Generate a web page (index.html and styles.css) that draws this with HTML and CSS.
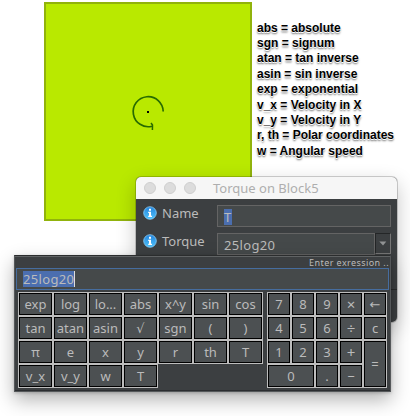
FILE: index.html
```html
<!DOCTYPE html>
<html lang="en">
<head>
<meta charset="utf-8">
<title>Torque on Block5</title>
<link rel="stylesheet" href="styles.css">
</head>
<body>
<main class="workspace">
  <div class="block">
    <svg class="torque" width="40" height="44" viewBox="0 0 40 44">
      <path d="M35.2 20.5A15 15 0 1 0 24 35.2" fill="none" stroke="#286b00" stroke-width="1.7"/>
      <path d="M23 32L24.5 34L24.4 39" fill="none" stroke="#286b00" stroke-width="1.5"/>
      <rect x="19" y="20" width="2" height="2" fill="#000"/>
    </svg>
  </div>
  <div class="legend">
    <div>abs = absolute</div>
    <div>sgn = signum</div>
    <div>atan = tan inverse</div>
    <div>asin = sin inverse</div>
    <div>exp = exponential</div>
    <div>v_x = Velocity in X</div>
    <div>v_y = Velocity in Y</div>
    <div>r, th = Polar coordinates</div>
    <div>w = Angular speed</div>
  </div>

  <section class="dialog">
    <header class="titlebar">
      <i class="dot"></i><i class="dot"></i><i class="dot"></i>
      <span class="title">Torque on Block5</span>
    </header>
    <div class="form">
      <div class="row">
        <svg class="info" width="14" height="14" viewBox="0 0 14 14"><defs><linearGradient id="b" x2="0" y2="1"><stop stop-color="#2383dc"/><stop offset="1" stop-color="#50c3fa"/></linearGradient></defs><circle cx="7" cy="7" r="6.3" fill="url(#b)" stroke="#8bcdf6" stroke-width=".8"/><path d="M6 2.8h2v2H6zM5.2 5.8H8v4h1v1.2H5.2V9.8H6V7h-.8z" fill="#fff"/></svg>
        <label class="name">Name</label>
        <div class="input"><span class="sel">T</span></div>
      </div>
      <div class="row">
        <svg class="info" width="14" height="14" viewBox="0 0 14 14"><circle cx="7" cy="7" r="6.3" fill="url(#b)" stroke="#8bcdf6" stroke-width=".8"/><path d="M6 2.8h2v2H6zM5.2 5.8H8v4h1v1.2H5.2V9.8H6V7h-.8z" fill="#fff"/></svg>
        <label>Torque</label>
        <div class="input combo">25log20</div>
        <div class="drop"><svg width="8" height="5" viewBox="0 0 8 5"><path d="M.3 .5h7L4 4.6z" fill="#919394"/></svg></div>
      </div>
    </div>
    <footer class="footer"></footer>
  </section>

  <section class="popup">
    <div class="hint">Enter exression ..</div>
    <div class="expression"><span class="sel">25log20</span></div>
    <div class="keypads">
      <div class="keys functions">
        <b>exp</b><b>log</b><b>lo...</b><b>abs</b><b>x^y</b><b>sin</b><b>cos</b>
        <b>tan</b><b>atan</b><b>asin</b><b>√</b><b>sgn</b><b>(</b><b>)</b>
        <b>π</b><b>e</b><b>x</b><b>y</b><b>r</b><b>th</b><b>T</b>
        <b>v_x</b><b>v_y</b><b>w</b><b>T</b>
      </div>
      <div class="keys numbers">
        <b>7</b><b>8</b><b>9</b><b class="op">×</b><b>←</b>
        <b>4</b><b>5</b><b>6</b><b class="op">÷</b><b>c</b>
        <b>1</b><b>2</b><b>3</b><b class="op">+</b><b class="equals">=</b>
        <b class="zero">0</b><b>.</b><b>−</b>
      </div>
    </div>
  </section>
</main>
</body>
</html>
```
FILE: styles.css
```css
* { box-sizing: border-box; }
body { margin: 0; background: #fff; }
.workspace {
  position: relative;
  width: 410px;
  height: 416px;
  overflow: hidden;
  font-family: "Noto Sans", "DejaVu Sans", sans-serif;
  font-size: 13px;
  color: #bbb;
}
.block {
  position: absolute;
  left: 44px;
  top: 2px;
  width: 208px;
  height: 219px;
  background: #b9e900;
  border: 2px solid #91b30c;
}
.torque { position: absolute; left: 82px; top: 87px; }
.legend {
  position: absolute;
  left: 257px;
  top: 20.6px;
  font: bold 12px/15.4px "Liberation Sans", sans-serif;
  color: #000;
  white-space: nowrap;
  text-shadow: 0 0 1px #fff, 0 1px 0 #fff, 0 2px 2px rgba(0, 0, 0, .6);
}
.dialog {
  position: absolute;
  left: 136px;
  top: 177px;
  width: 261px;
  height: 145px;
  background: #3c3f41;
  border-radius: 5px;
  overflow: hidden;
  box-shadow: 0 0 0 1px rgba(0, 0, 0, .18), 0 7px 20px rgba(0, 0, 0, .24);
}
.titlebar {
  display: flex;
  align-items: center;
  gap: 8px;
  height: 22px;
  padding-left: 8px;
  background: #f6f6f6;
}
.dot {
  width: 12px;
  height: 12px;
  border-radius: 50%;
  background: #dcdcdc;
  border: 1px solid #cecece;
}
.title { margin-left: 9px; color: #aeaeae; line-height: 20px; white-space: nowrap; }
.form { height: 90px; padding: 6px 6px 0 7px; display: grid; gap: 6px; align-content: start; }
.footer { height: 33px; border-top: 1px solid #282a2b; }
.row { display: flex; height: 22px; }
.info { margin: 1px 5px 0 0; flex: none; }
.row label { width: 55px; line-height: 16px; }
.input {
  flex: 1;
  border: 1px solid #646464;
  background: #45494a;
  padding: 3px 0 0 6px;
  line-height: 16px;
}
.input .sel { padding: 0 1px 0 0; }
.combo { letter-spacing: .35px; }
.sel { display: inline-block; height: 16px; line-height: 16px; background: #4b6eaf; }
.drop {
  width: 16px;
  height: 21px;
  border: 1px solid #242627;
  border-right-color: #777;
  border-bottom-color: #777;
  display: flex;
  align-items: center;
  justify-content: center;
}
.popup {
  position: absolute;
  left: 14px;
  top: 255px;
  width: 377px;
  height: 137px;
  padding: 0 1px;
  background: #3c3f41;
  border: 1px solid #55585a;
  border-top-color: #2b2d2e;
  box-shadow: inset 0 1px 0 #606364, inset 0 -1px 0 #2b2d30, 0 8px 18px rgba(0, 0, 0, .3), 0 1px 3px rgba(0, 0, 0, .2);
}
.hint { height: 12px; line-height: 13px; font-size: 9px; letter-spacing: .42px; text-align: right; }
.expression {
  height: 22px;
  padding: 2px 0 0 6px;
  border: 1px solid #466d9f;
  background: #45494a;
  line-height: 16px;
}
.expression .sel { border-right: 1px solid #ddd; letter-spacing: .35px; }
.keypads { display: flex; gap: 4px; padding: 2px 0 0 2px; }
.keys { display: grid; grid-auto-rows: 24px; font-size: 13px; }
.functions { grid-template-columns: repeat(7, 35px); }
.numbers { grid-template-columns: repeat(5, 24px); }
.keys b {
  display: flex;
  align-items: center;
  justify-content: center;
  border: 1px solid #000;
  outline: 1px solid #bdbdbd;
  margin: 1px;
  background: #4c5052;
  font-weight: normal;
  line-height: 18px;
  white-space: nowrap;
}
.keys .op { font-size: 15px; }
.keys .zero { grid-column: span 2; }
.keys .equals { grid-row: span 2; }
```
